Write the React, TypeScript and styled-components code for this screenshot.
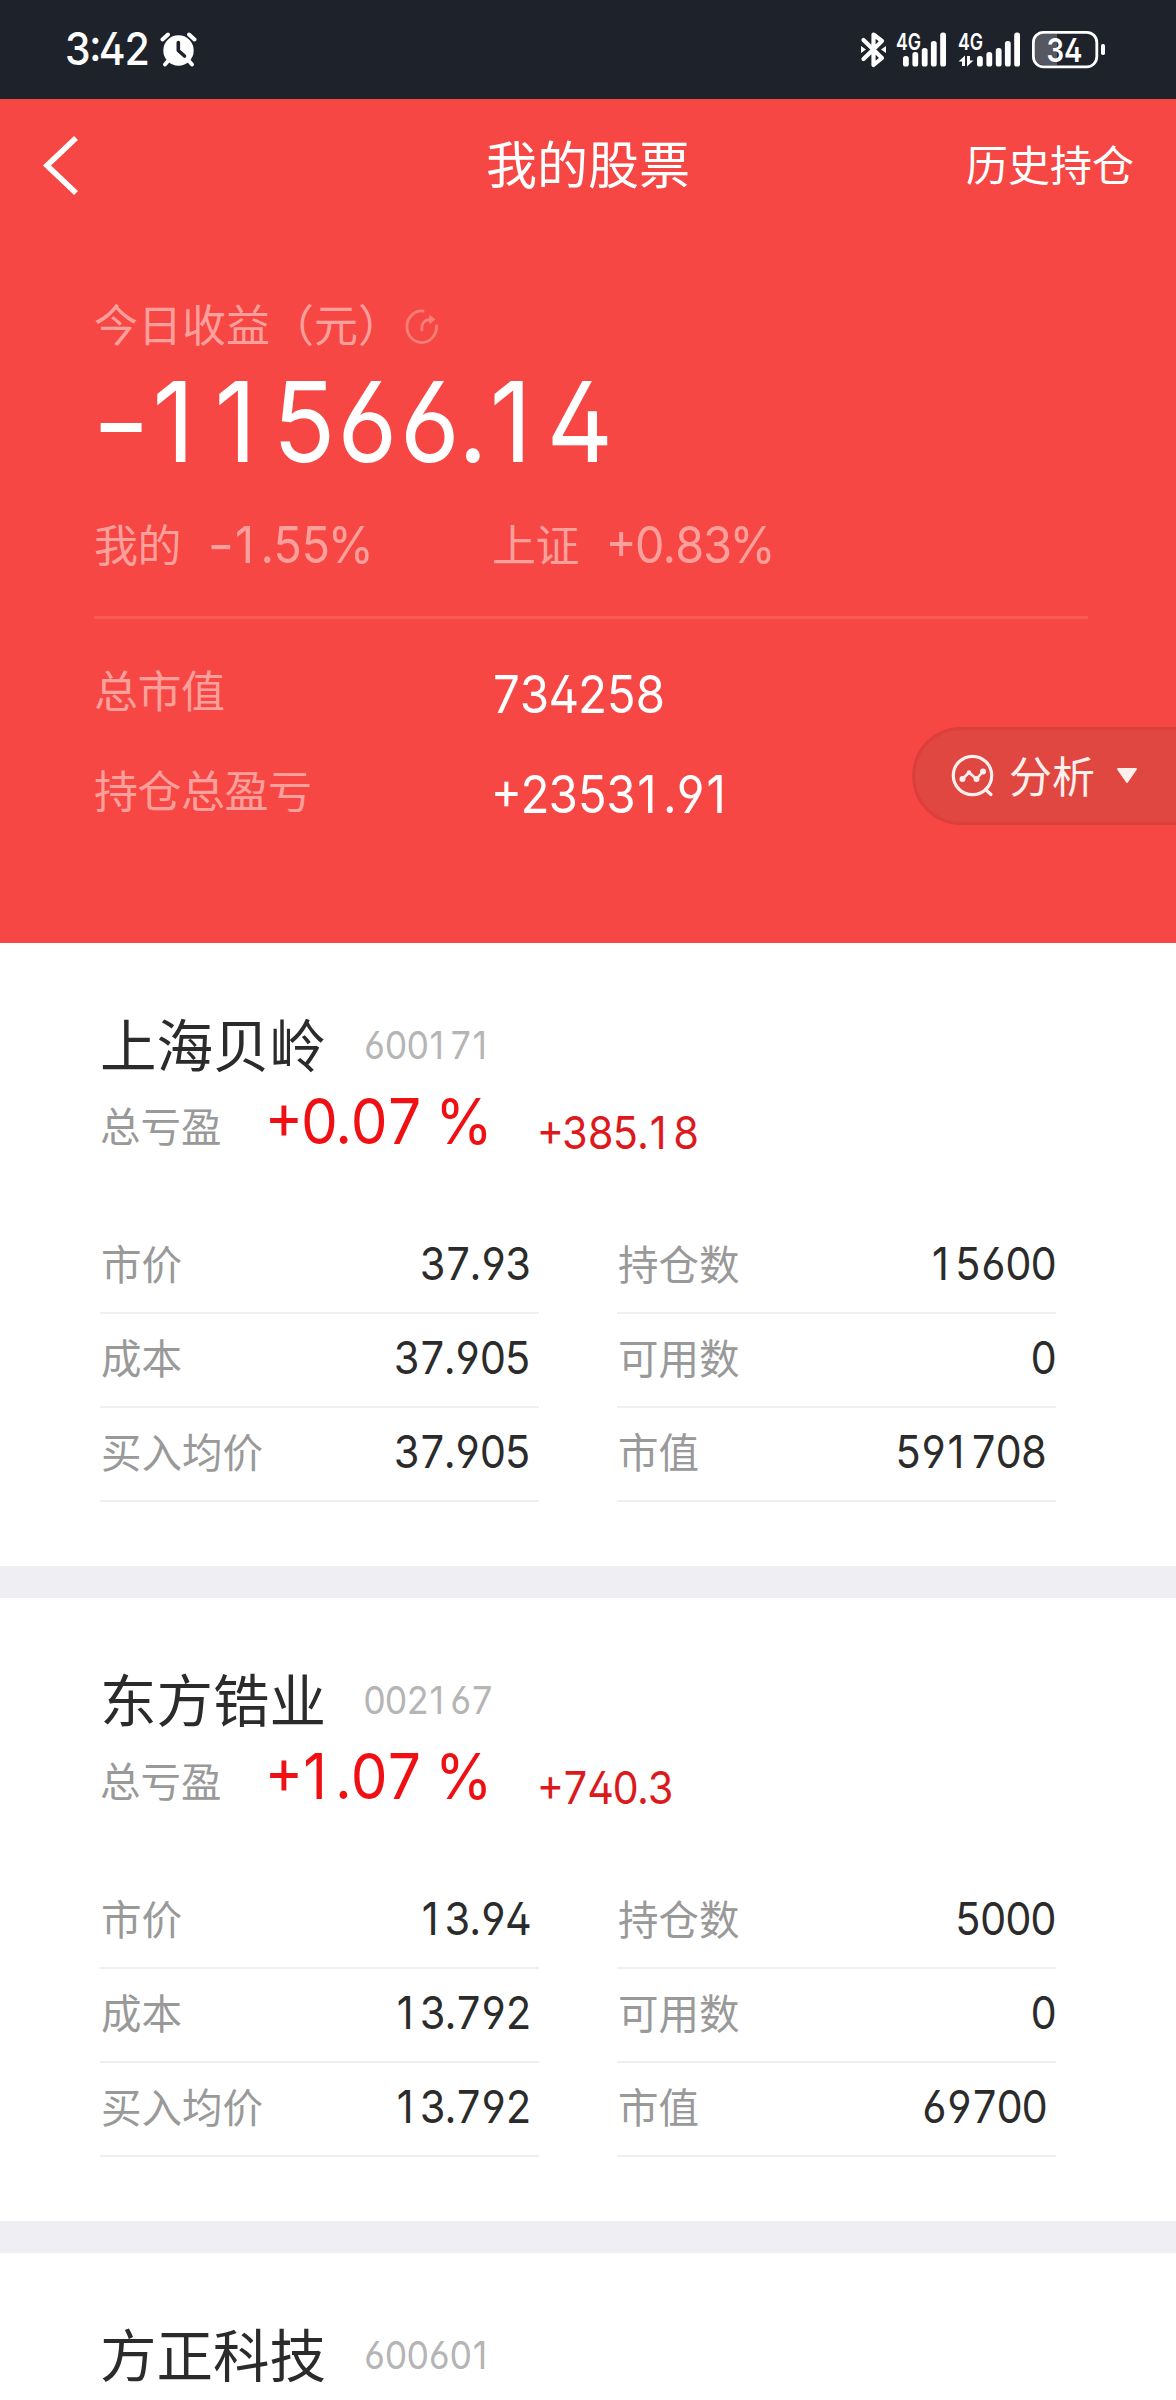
import React from "react";
import styled, { createGlobalStyle } from "styled-components";

const CJK = '"Noto Sans CJK SC", sans-serif';
const NUM = 'Inter, "Noto Sans CJK SC", sans-serif';

const GlobalStyle = createGlobalStyle`
  * { box-sizing: border-box; }
  body { margin: 0; background: #fff; }
`;

const Page = styled.div`
  width: 1176px;
  height: 2400px;
  overflow: hidden;
  background: #fff;
  font-family: ${CJK};
`;

/* Narrow open-shaped numerals */
const NumText = styled.span<{ $size: number; $color?: string; $right?: boolean; $weight?: number }>`
  display: block;
  margin-left: -1px;
  margin-right: ${(p) => (p.$right ? 1 : 0)}px;
  white-space: pre;
  font-family: ${NUM};
  font-size: ${(p) => p.$size}px;
  font-weight: ${(p) => p.$weight ?? 400};
  line-height: 1;
  letter-spacing: -0.042em;
  color: ${(p) => p.$color ?? "#fff"};
  font-feature-settings: "tnum", "case", "cv02", "cv03", "cv04", "calt" 0;
  transform: scaleX(0.92);
  transform-origin: ${(p) => (p.$right ? "right" : "left")} center;
`;

/* Proportional glyph set in a cell of fixed advance */
const Glyph = styled.span<{ $advance: number; $shift: number; $stretch?: number }>`
  display: inline-block;
  width: ${(p) => p.$advance}em;
  text-indent: ${(p) => p.$shift}em;
  letter-spacing: 0;
  font-feature-settings: "calt" 0;
  transform: scaleX(${(p) => p.$stretch ?? 1});
  transform-origin: left center;
`;

const ADVANCES: Record<string, { advance: number; shift: number; stretch?: number }> = {
  "1": { advance: 0.6025, shift: 0.05 },
  "-": { advance: 0.527, shift: -0.01, stretch: 1.24 },
  ".": { advance: 0.2485, shift: -0.01 },
  "%": { advance: 0.8, shift: -0.04 },
  " ": { advance: 0.28, shift: 0 },
};

const Num = ({ children, ...style }: { children: string; $size: number; $color?: string; $right?: boolean; $weight?: number }) => (
  <NumText {...style}>
    {children.split(/([1\-.% ])/).map((part, i) => {
      const cell = ADVANCES[part];
      return cell ? (
        <Glyph key={i} $advance={cell.advance} $shift={cell.shift} $stretch={cell.stretch}>{part}</Glyph>
      ) : (
        part
      );
    })}
  </NumText>
);

const StatusBar = styled.div`
  display: flex;
  align-items: center;
  justify-content: space-between;
  height: 99px;
  padding: 0 69px 0 66px;
  background: #1e222b;
`;

const StatusGroup = styled.div`
  display: flex;
  align-items: center;
`;

const ClockSlot = styled.div`
  width: 94px;
`;

const Header = styled.header`
  height: 844px;
  background: #f64744;
`;

const NavBar = styled.div`
  display: grid;
  grid-template-columns: 1fr auto 1fr;
  align-items: center;
  height: 130px;
  padding: 0 42px;
`;

const Title = styled.h1`
  margin: -4px 0 0;
  font-size: 51px;
  font-weight: 400;
  line-height: 60px;
  color: #fff;
`;

const NavLink = styled.a`
  justify-self: end;
  margin-top: -3px;
  font-size: 42px;
  line-height: 60px;
  color: #fff;
`;

const Summary = styled.section`
  padding: 66px 88px 0 94px;
`;

const Muted = styled.span<{ $loose?: boolean }>`
  font-size: 44px;
  line-height: 56px;
  letter-spacing: ${(p) => (p.$loose ? 0 : -0.5)}px;
  color: #fda09c;
  white-space: nowrap;
`;

const IncomeLabel = styled.div`
  display: flex;
  align-items: center;
  height: 56px;
`;

const BigNumber = styled.div`
  padding-top: 14px;
  height: 166px;
`;

const Pair = styled.div<{ $height: number }>`
  display: grid;
  grid-template-columns: 398px 1fr;
  align-items: center;
  height: ${(p) => p.$height}px;
`;

const Inline = styled.div`
  display: flex;
  align-items: center;
  gap: 28px;

  ${Muted} {
    margin-top: -2px;
  }
`;

const Divider = styled.div`
  height: 3px;
  margin: 51px 0 20px;
  background: #fb5b56;
`;

const Totals = styled.div`
  position: relative;
`;

const TotalValue = styled.div`
  padding-top: 11px;
`;

const AnalysisButton = styled.button`
  position: absolute;
  top: 88px;
  right: -88px;
  display: flex;
  align-items: center;
  width: 264px;
  height: 98px;
  padding: 0 0 0 36px;
  border: 3px solid #db3f3b;
  border-right: 0;
  border-radius: 49px 0 0 49px;
  background: #df4740;
  color: #fff0ee;
  font-family: ${CJK};
  font-size: 43px;
  line-height: 56px;
`;

const AnalysisText = styled.span`
  margin: -5px 21px 0 14px;
`;

const Card = styled.article`
  height: 655px;
  padding: 72px 120px 0 100px;
  border-bottom: 32px solid #eeeef3;
  background: #fff;
`;

const CardHead = styled.div`
  display: flex;
  align-items: center;
  height: 60px;
`;

const StockName = styled.h2`
  margin: -6px 0 0;
  width: 264px;
  font-size: 56.5px;
  font-weight: 400;
  line-height: 60px;
  color: #2b2b2b;
`;

const ProfitRow = styled.div`
  display: grid;
  grid-template-columns: 166px 272px 1fr;
  height: 145px;
  padding-top: 12px;
`;

const Label = styled.span`
  font-size: 40.5px;
  line-height: 56px;
  color: #999;
  white-space: nowrap;
`;

const ProfitLabel = styled(Label)`
  padding-top: 10px;
`;

const SmallProfit = styled.div`
  padding-top: 23px;
`;

const BigProfit = styled.div`
  padding-top: 2px;
`;

const Details = styled.div`
  display: grid;
  grid-template-columns: 439px 439px;
  column-gap: 78px;
`;

const Cell = styled.div<{ $inset: number }>`
  display: flex;
  align-items: center;
  justify-content: space-between;
  height: 94px;
  padding: 0 ${(p) => p.$inset}px 6px 1px;
  border-bottom: 2px solid #efefef;

  ${Label} {
    margin-top: -1px;
  }
`;

const AlarmIcon = () => (
  <svg width="37" height="36" viewBox="0 0 37 36" fill="none">
    <circle cx="18.5" cy="18.5" r="15.2" fill="#fff" />
    <path d="M2.5 7.5 8 2.5M34.5 7.5 29 2.5" stroke="#fff" strokeWidth="4" strokeLinecap="round" />
    <path d="M8 29 5 32.5M29 29 32 32.5" stroke="#fff" strokeWidth="4" strokeLinecap="round" />
    <path d="M18.3 10.5V18.5L24.5 24" stroke="#1e222b" strokeWidth="3.6" strokeLinecap="round" strokeLinejoin="round" />
  </svg>
);

const BARS = [
  { x: 903, top: 56 },
  { x: 912.4, top: 52 },
  { x: 921.8, top: 48 },
  { x: 930.9, top: 41 },
  { x: 940.2, top: 32.5 },
];

const Signal = ({ offset }: { offset: number }) => (
  <g>
    {BARS.map((b) => (
      <rect key={b.x} x={b.x + offset} y={b.top} width="5.8" height={66.5 - b.top} rx="2.6" />
    ))}
  </g>
);

const StatusIcons = () => (
  <svg width="248" height="44" viewBox="859 28 248 44" fill="#fff">
    <path
      d="M863.5 40 882 58 873.5 65V34.5L882 41 863.5 59"
      fill="none"
      stroke="#fff"
      strokeWidth="4.2"
      strokeLinecap="round"
      strokeLinejoin="round"
    />
    <path d="M861 46 866 49.5 861 53ZM886 46 881 49.5 886 53Z" />
    <text x="896" y="49.5" fontFamily="Inter, sans-serif" fontSize="23" fontWeight="600" textLength="25" lengthAdjust="spacingAndGlyphs">4G</text>
    <Signal offset={0} />
    <text x="958" y="49.5" fontFamily="Inter, sans-serif" fontSize="23" fontWeight="600" textLength="25" lengthAdjust="spacingAndGlyphs">4G</text>
    <path d="M958.5 61.5 965 55.5V66H962V61.5ZM973.5 60.5 967 66.5V56H970V60.5Z" />
    <Signal offset={74} />
    <path d="M1044 34H1057V65H1044Q1035 65 1035 56V43Q1035 34 1044 34Z" fill="#555861" />
    <rect x="1033.4" y="32.4" width="63.4" height="34.4" rx="10" fill="none" stroke="#fff" strokeWidth="2.8" />
    <rect x="1101" y="44" width="4" height="11" rx="1.8" />
    <text x="1046.5" y="61.5" fontFamily="Inter, sans-serif" fontSize="33" fontWeight="600" textLength="36" lengthAdjust="spacingAndGlyphs" style={{ fontFeatureSettings: '"cv02"' }}>34</text>
  </svg>
);

const BackIcon = () => (
  <svg width="40" height="64" viewBox="0 0 40 64" fill="none">
    <path d="M34 4 5 31.5 34 59" stroke="#fff" strokeWidth="5.6" />
  </svg>
);

const BackSlot = styled.div`
  display: flex;
  margin-bottom: -3px;
`;

const ShareIcon = styled.svg`
  margin: 8px 0 0 3px;
`;

const ShareGlyph = () => (
  <ShareIcon width="34" height="38" viewBox="0 0 34 38" fill="none" stroke="#fb7d79" strokeWidth="2.8" strokeLinecap="round">
    <path d="M18 3A14.8 15.8 0 1 0 31.5 18" />
    <path d="M17 22C16 15 20 11.5 26 11.5" />
    <path d="M25 8 29.5 11.5 25 15Z" fill="#fb7d79" strokeWidth="1.5" strokeLinejoin="round" />
  </ShareIcon>
);

const AnalysisIcon = () => (
  <svg width="44" height="44" viewBox="0 0 44 44" fill="none" stroke="#fff0ee" strokeWidth="3.2" strokeLinecap="round">
    <circle cx="21.5" cy="21.5" r="19.2" />
    <path d="M34.5 35.5 40 40.5" />
    <path d="M11.5 25 18 18.5 25.5 25 32 17.5" strokeWidth="2.6" strokeLinejoin="round" />
    <g fill="#fff0ee" stroke="none">
      <circle cx="11.5" cy="25" r="3" />
      <circle cx="18" cy="18.5" r="2.2" />
      <circle cx="25.5" cy="25" r="3" />
      <circle cx="32" cy="17.5" r="3" />
    </g>
  </svg>
);

const CaretIcon = () => (
  <svg width="22" height="18" viewBox="0 0 22 18">
    <path d="M2 2H20L11 15Z" fill="#fff0ee" stroke="#fff0ee" strokeWidth="2" strokeLinejoin="round" />
  </svg>
);

interface Stock {
  name: string;
  code: string;
  rate: string;
  profit: string;
  price: string;
  cost: string;
  average: string;
  held: string;
  available: string;
  value: string;
}

const STOCKS: Stock[] = [
  { name: "上海贝岭", code: "600171", rate: "+0.07 %", profit: "+385.18", price: "37.93", cost: "37.905", average: "37.905", held: "15600", available: "0", value: "591708" },
  { name: "东方锆业", code: "002167", rate: "+1.07 %", profit: "+740.3", price: "13.94", cost: "13.792", average: "13.792", held: "5000", available: "0", value: "69700" },
];

const StockHeading = ({ name, code }: { name: string; code: string }) => (
  <CardHead>
    <StockName>{name}</StockName>
    <Num $size={38.7} $color="#b5b5b5">{code}</Num>
  </CardHead>
);

const Detail = ({ label, value, inset }: { label: string; value: string; inset: number }) => (
  <Cell $inset={inset}>
    <Label>{label}</Label>
    <Num $size={45} $color="#2b2b2b" $right>{value}</Num>
  </Cell>
);

const StockCard = ({ stock }: { stock: Stock }) => (
  <Card>
    <StockHeading name={stock.name} code={stock.code} />
    <ProfitRow>
      <ProfitLabel>总亏盈</ProfitLabel>
      <BigProfit>
        <Num $size={63.5} $color="#f00f12">{stock.rate}</Num>
      </BigProfit>
      <SmallProfit>
        <Num $size={45} $color="#dc1a1d">{stock.profit}</Num>
      </SmallProfit>
    </ProfitRow>
    <Details>
      <Detail label="市价" value={stock.price} inset={8} />
      <Detail label="持仓数" value={stock.held} inset={0} />
      <Detail label="成本" value={stock.cost} inset={8} />
      <Detail label="可用数" value={stock.available} inset={0} />
      <Detail label="买入均价" value={stock.average} inset={8} />
      <Detail label="市值" value={stock.value} inset={9} />
    </Details>
  </Card>
);

export default function App() {
  return (
    <Page>
      <GlobalStyle />
      <StatusBar>
        <StatusGroup>
          <ClockSlot>
            <Num $size={44.5} $weight={500}>3:42</Num>
          </ClockSlot>
          <AlarmIcon />
        </StatusGroup>
        <StatusIcons />
      </StatusBar>
      <Header>
        <NavBar>
          <BackSlot><BackIcon /></BackSlot>
          <Title>我的股票</Title>
          <NavLink>历史持仓</NavLink>
        </NavBar>
        <Summary>
          <IncomeLabel>
            <Muted $loose>今日收益（元）</Muted>
            <ShareGlyph />
          </IncomeLabel>
          <BigNumber>
            <Num $size={112}>-11566.14</Num>
          </BigNumber>
          <Pair $height={48}>
            <Inline>
              <Muted>我的</Muted>
              <Num $size={51} $color="#fda09c">-1.55%</Num>
            </Inline>
            <Inline>
              <Muted>上证</Muted>
              <Num $size={51} $color="#fda09c">+0.83%</Num>
            </Inline>
          </Pair>
          <Divider />
          <Totals>
            <Pair $height={100}>
              <Muted>总市值</Muted>
              <TotalValue><Num $size={51.6}>734258</Num></TotalValue>
            </Pair>
            <Pair $height={100}>
              <Muted>持仓总盈亏</Muted>
              <TotalValue><Num $size={51.6}>+23531.91</Num></TotalValue>
            </Pair>
            <AnalysisButton>
              <AnalysisIcon />
              <AnalysisText>分析</AnalysisText>
              <CaretIcon />
            </AnalysisButton>
          </Totals>
        </Summary>
      </Header>
      {STOCKS.map((s) => (
        <StockCard key={s.code} stock={s} />
      ))}
      <Card>
        <StockHeading name="方正科技" code="600601" />
      </Card>
    </Page>
  );
}
